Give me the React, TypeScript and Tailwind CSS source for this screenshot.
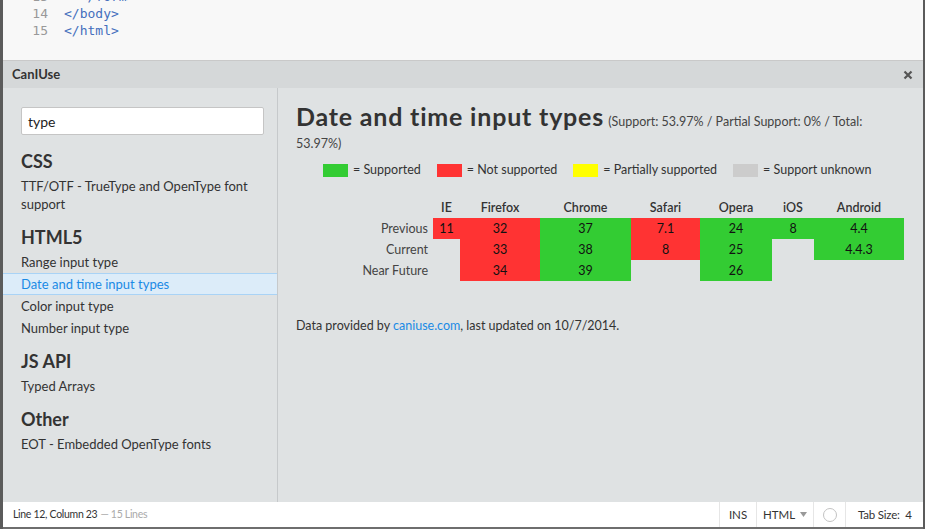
import React from 'react';

const G = 'bg-[#33cc33]';
const R = 'bg-[#ff3333]';

type Cell = { v: string; c: string } | null;

const browsers = [
  { name: 'IE', w: 'w-[27px]' },
  { name: 'Firefox', w: 'w-[80px]' },
  { name: 'Chrome', w: 'w-[91px]' },
  { name: 'Safari', w: 'w-[69px]' },
  { name: 'Opera', w: 'w-[72px]' },
  { name: 'iOS', w: 'w-[42px]' },
  { name: 'Android', w: 'w-[90px]' },
];

const rows: { label: string; cells: Cell[] }[] = [
  {
    label: 'Previous',
    cells: [
      { v: '11', c: R },
      { v: '32', c: R },
      { v: '37', c: G },
      { v: '7.1', c: R },
      { v: '24', c: G },
      { v: '8', c: G },
      { v: '4.4', c: G },
    ],
  },
  {
    label: 'Current',
    cells: [null, { v: '33', c: R }, { v: '38', c: G }, { v: '8', c: R }, { v: '25', c: G }, null, { v: '4.4.3', c: G }],
  },
  {
    label: 'Near Future',
    cells: [null, { v: '34', c: R }, { v: '39', c: G }, null, { v: '26', c: G }, null, null],
  },
];

const legend = [
  { c: G, t: '= Supported' },
  { c: R, t: '= Not supported' },
  { c: 'bg-[#ffff00]', t: '= Partially supported' },
  { c: 'bg-[#cccccc]', t: '= Support unknown' },
];

const Section = ({ title, items }: { title: string; items: { t: string; active?: boolean }[] }) => (
  <div className="mb-[10px]">
    <h2 className="px-[18px] text-[18px] font-bold leading-[24px] text-[#333]">{title}</h2>
    <ul className="mt-[2px]">
      {items.map((it, i) => (
        <li
          key={i}
          className={
            it.active
              ? 'px-[18px] text-[13px] leading-[18px] py-px bg-[#dcecf9] border-y border-[#a9d3f6] text-[#1a8ae5]'
              : 'px-[18px] text-[13px] leading-[18px] py-px border-y border-transparent text-[#333]'
          }
        >
          {it.t}
        </li>
      ))}
    </ul>
  </div>
);

export default function App() {
  return (
    <div className="w-[925px] h-[529px] overflow-hidden flex bg-[#5b5b5b] font-['Lato','Noto_Sans',sans-serif]">
      <div className="w-[3px] shrink-0" />
      <div className="w-[920px] flex flex-col">
        {/* editor */}
        <div className="h-[61px] shrink-0 bg-[#f8f8f8] border-b border-[#c9c9c9] font-['DejaVu_Sans_Mono',monospace] text-[13px] leading-[17px] overflow-hidden">
          <div className="-mt-[12px]">
            {[
              ['13', '  </form>'],
              ['14', '</body>'],
              ['15', '</html>'],
            ].map(([n, code]) => (
              <div key={n} className="flex">
                <span className="w-[45px] text-right text-[#999]">{n}</span>
                <span className="pl-[16px] text-[#446fbd] whitespace-pre">{code}</span>
              </div>
            ))}
          </div>
        </div>

        {/* panel header */}
        <div className="h-[27px] shrink-0 bg-[#d5d8d9] flex items-center justify-between pl-[9px] pr-[10px]">
          <span className="text-[13px] font-bold text-[#333]">CanIUse</span>
          <svg width="10" height="10" viewBox="0 0 10 10">
            <path d="M1.5 1.5 L8.5 8.5 M8.5 1.5 L1.5 8.5" stroke="#555" strokeWidth="2.2" />
          </svg>
        </div>

        {/* body */}
        <div className="flex-1 flex bg-[#dfe2e3] min-h-0">
          <aside className="w-[275px] shrink-0 border-r border-[#c6c9cb]">
            <div className="pl-[18px] pr-[13px] pt-[19px] pb-[14px]">
              <div className="h-[28px] bg-white border border-[#c5c5c5] rounded-[2px] flex items-center px-[6px] text-[14px] text-[#222]">
                type
              </div>
            </div>
            <Section title="CSS" items={[{ t: 'TTF/OTF - TrueType and OpenType font support' }]} />
            <Section
              title="HTML5"
              items={[
                { t: 'Range input type' },
                { t: 'Date and time input types', active: true },
                { t: 'Color input type' },
                { t: 'Number input type' },
              ]}
            />
            <Section title="JS API" items={[{ t: 'Typed Arrays' }]} />
            <Section title="Other" items={[{ t: 'EOT - Embedded OpenType fonts' }]} />
          </aside>

          <main className="flex-1 pl-[18px] pr-[18px] pt-[16px] text-[#333]">
            <div className="leading-[20px]">
              <span className="text-[25px] font-bold leading-[24px] tracking-[0.8px] text-[#333]">
                Date and time input types
              </span>{' '}
              <span className="text-[12.5px] text-[#444]">(Support: 53.97% / Partial Support: 0% / Total: 53.97%)</span>
            </div>

            <div className="flex gap-[16px] ml-[27px] mt-[7px] text-[12.5px] text-[#333]">
              {legend.map((l, i) => (
                <div key={i} className="flex items-center gap-[5px]">
                  <span className={`w-[25px] h-[13px] ${l.c}`} />
                  <span>{l.t}</span>
                </div>
              ))}
            </div>

            <div className="ml-[43px] mt-[20px] text-[12.5px]">
              <div className="flex h-[18px] items-center font-semibold text-[#333]">
                <div className="w-[94px]" />
                {browsers.map((b) => (
                  <div key={b.name} className={`${b.w} text-center`}>
                    {b.name}
                  </div>
                ))}
              </div>
              {rows.map((r) => (
                <div key={r.label} className="flex h-[21px]">
                  <div className="w-[94px] pr-[5px] text-right leading-[21px] text-[#444]">{r.label}</div>
                  {r.cells.map((c, i) => (
                    <div
                      key={i}
                      className={`${browsers[i].w} text-center leading-[21px] text-[#111] ${c ? c.c : ''}`}
                    >
                      {c ? c.v : ''}
                    </div>
                  ))}
                </div>
              ))}
            </div>

            <p className="mt-[36px] text-[12.5px] text-[#333]">
              Data provided by <span className="text-[#1a8ae5]">caniuse.com</span>, last updated on 10/7/2014.
            </p>
          </main>
        </div>

        {/* status bar */}
        <div className="h-[25px] shrink-0 bg-white flex items-stretch text-[11.5px] text-[#333]">
          <div className="flex-1 flex items-center pl-[10px] text-[10.5px] tracking-[-0.3px]">
            Line 12, Column 23<span className="text-[#aaa] ml-[3px]">— 15 Lines</span>
          </div>
          <div className="w-[37px] border-l border-[#e6e6e6] flex items-center justify-center">INS</div>
          <div className="w-[57px] border-l border-[#e6e6e6] flex items-center justify-center gap-[5px]">
            HTML
            <svg width="7" height="5" viewBox="0 0 7 5">
              <path d="M0 0 H7 L3.5 5 Z" fill="#999" />
            </svg>
          </div>
          <div className="w-[32px] border-l border-[#e6e6e6] flex items-center justify-center">
            <span className="w-[14px] h-[14px] rounded-full border border-[#c3c3c3]" />
          </div>
          <div className="w-[78px] border-l border-[#e6e6e6] flex items-center pl-[12px] tracking-[-0.2px]">
            Tab Size:&nbsp; 4
          </div>
        </div>
        <div className="h-[2px] shrink-0 bg-[#6e6e6e]" />
      </div>
      <div className="w-[2px] shrink-0" />
    </div>
  );
}
